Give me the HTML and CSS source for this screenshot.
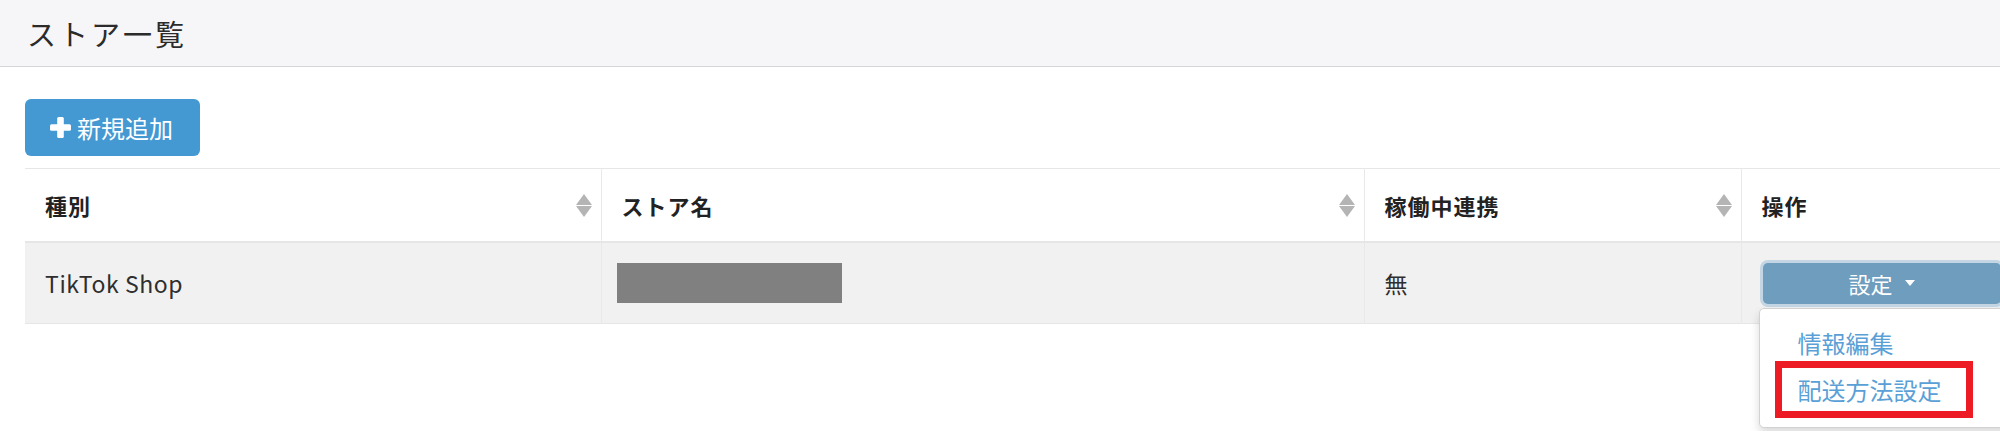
FILE: index.html
```html
<!DOCTYPE html>
<html lang="ja">
<head>
<meta charset="utf-8">
<title>ストア一覧</title>
<link rel="stylesheet" href="styles.css">
</head>
<body>
<header class="page-header">
  <h1 class="page-title">ストア一覧</h1>
</header>
<main class="content">
  <button class="btn-add" type="button">
    <svg class="icon-plus" viewBox="0 0 21 21" width="21" height="21" aria-hidden="true">
      <rect x="7.2" y="0" width="6.6" height="21" rx="1.5" fill="#fff"/>
      <rect x="0" y="7.2" width="21" height="6.6" rx="1.5" fill="#fff"/>
    </svg>
    <span>新規追加</span>
  </button>
  <table class="store-table">
    <colgroup>
      <col class="col-type">
      <col class="col-name">
      <col class="col-link">
      <col class="col-ops">
    </colgroup>
    <thead>
      <tr>
        <th><div class="th-inner"><span>種別</span><svg class="sort" viewBox="0 0 16 23" width="16" height="23" aria-hidden="true"><path d="M8 0 L16 11 L0 11 Z" fill="#b4b4b4"/><path d="M0 12 L16 12 L8 23 Z" fill="#b4b4b4"/></svg></div></th>
        <th><div class="th-inner"><span>ストア名</span><svg class="sort" viewBox="0 0 16 23" width="16" height="23" aria-hidden="true"><path d="M8 0 L16 11 L0 11 Z" fill="#b4b4b4"/><path d="M0 12 L16 12 L8 23 Z" fill="#b4b4b4"/></svg></div></th>
        <th><div class="th-inner"><span>稼働中連携</span><svg class="sort" viewBox="0 0 16 23" width="16" height="23" aria-hidden="true"><path d="M8 0 L16 11 L0 11 Z" fill="#b4b4b4"/><path d="M0 12 L16 12 L8 23 Z" fill="#b4b4b4"/></svg></div></th>
        <th><div class="th-inner"><span>操作</span></div></th>
      </tr>
    </thead>
    <tbody>
      <tr>
        <td>TikTok Shop</td>
        <td><div class="masked"></div></td>
        <td>無</td>
        <td class="ops-cell">
          <div class="dropdown">
            <button class="btn-setting" type="button">設定<span class="caret"></span></button>
            <ul class="dropdown-menu">
              <li><a href="#">情報編集</a></li>
              <li><a href="#">配送方法設定</a></li>
              <li class="highlight" aria-hidden="true"></li>
            </ul>
          </div>
        </td>
      </tr>
    </tbody>
  </table>
</main>
</body>
</html>
```
FILE: styles.css
```css
html, body {
  margin: 0;
  padding: 0;
  overflow: hidden;
  background: #ffffff;
}

body {
  font-family: "Noto Sans CJK JP", "Noto Sans", sans-serif;
  color: #333333;
  width: 2000px;
  height: 431px;
}

.page-header {
  height: 66px;
  background: #f6f6f8;
  border-bottom: 1px solid #d4d4d9;
  display: flex;
  align-items: center;
  padding-left: 27px;
}

.page-title {
  margin: 0;
  font-size: 29px;
  font-weight: 400;
  letter-spacing: 3px;
  color: #2b2b2b;
  line-height: 1;
}

.content {
  padding: 32px 0 0 25px;
}

.btn-add {
  display: flex;
  align-items: center;
  gap: 6px;
  width: 175px;
  height: 57px;
  padding: 0 0 0 25px;
  border: none;
  border-radius: 6px;
  background: #4499d3;
  color: #ffffff;
  font-family: inherit;
  font-size: 24px;
  line-height: 1;
  cursor: pointer;
}

.icon-plus {
  flex: none;
}

.store-table {
  margin-top: 12px;
  width: 1993px;
  table-layout: fixed;
  border-collapse: collapse;
}

.col-type { width: 576px; }
.col-name { width: 763px; }
.col-link { width: 377px; }
.col-ops { width: 277px; }

.store-table th,
.store-table td {
  text-align: left;
  vertical-align: middle;
  border-left: 1px solid #e9e9e9;
}

.store-table th:first-child,
.store-table td:first-child {
  border-left: none;
}

.store-table thead tr {
  border-top: 1px solid #e6e6e6;
  border-bottom: 2px solid #e6e6e6;
}

.store-table th {
  height: 72px;
  padding: 0 9px 0 20px;
  font-size: 22px;
  font-weight: 700;
  color: #222222;
  letter-spacing: 1px;
  background: #ffffff;
}

.th-inner {
  display: flex;
  align-items: center;
  justify-content: space-between;
}

.sort {
  flex: none;
}

.store-table tbody tr {
  background: #f1f1f1;
  border-bottom: 1px solid #e6e6e6;
}

.store-table td {
  height: 80px;
  padding: 0 18px 0 20px;
  font-size: 23px;
  color: #2e2e2e;
  letter-spacing: 0.6px;
}

.masked {
  width: 225px;
  height: 40px;
  background: #808080;
  margin-left: -5px;
}

.ops-cell {
  position: relative;
}

.dropdown {
  position: relative;
  margin-left: 1px;
}

.btn-setting {
  display: flex;
  align-items: center;
  justify-content: center;
  gap: 12px;
  width: 238px;
  height: 41px;
  border: none;
  border-radius: 5px;
  background: #6f9dbe;
  box-shadow: 0 0 0 3px #c4d6e4;
  color: #ffffff;
  font-family: inherit;
  font-size: 22px;
  padding: 0;
  cursor: pointer;
}

.caret {
  width: 0;
  height: 0;
  border-left: 5px solid transparent;
  border-right: 5px solid transparent;
  border-top: 6px solid #ffffff;
}

.dropdown-menu {
  position: absolute;
  top: 45px;
  left: -4px;
  width: 260px;
  height: 120px;
  box-sizing: border-box;
  margin: 0;
  padding: 10px 0 0 0;
  list-style: none;
  background: #ffffff;
  border: 1px solid #d2d2d2;
  border-radius: 5px;
  box-shadow: 0 5px 10px rgba(0, 0, 0, 0.15);
  z-index: 5;
}

.dropdown-menu li a {
  display: block;
  height: 47px;
  line-height: 47px;
  padding-left: 38px;
  font-size: 24px;
  color: #5a9fd6;
  text-decoration: none;
  letter-spacing: 0;
}

.dropdown-menu .highlight {
  position: absolute;
  left: 15px;
  top: 52px;
  width: 198px;
  height: 57px;
  box-sizing: border-box;
  border: 7px solid #ed1c24;
}
```
